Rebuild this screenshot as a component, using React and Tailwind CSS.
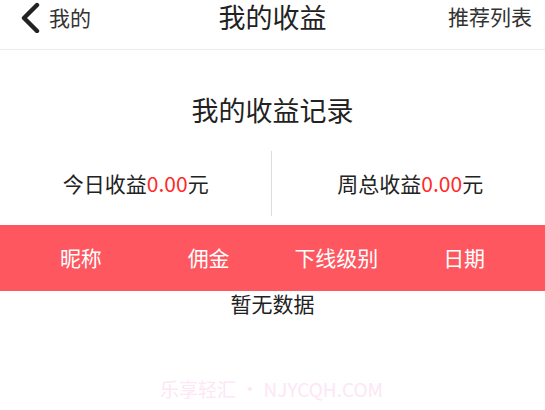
import React from 'react';

const font = { fontFamily: '"Noto Sans CJK SC", "Noto Sans", sans-serif' };

function Header() {
  return (
    <div className="flex items-start justify-between h-[50px] border-b border-[#ececec] px-[13px]">
      <div className="w-[120px] flex items-center h-[34px] pl-[5px]">
        <svg width="25" height="31" viewBox="0 0 25 31" fill="none">
          <path d="M19 3 L6 16 L19 29" stroke="#222" strokeWidth="4.4" strokeLinecap="round" strokeLinejoin="round" />
        </svg>
        <span className="ml-[6px] text-[21px] text-[#333] leading-[30px]">我的</span>
      </div>
      <div className="text-[27px] text-[#222] leading-[34px]">我的收益</div>
      <div className="w-[120px] flex justify-end items-center h-[32px]">
        <span className="text-[21px] text-[#333] leading-[30px]">推荐列表</span>
      </div>
    </div>
  );
}

export default function App() {
  const cols = ['昵称', '佣金', '下线级别', '日期'];
  return (
    <div className="w-[545px] h-[410px] bg-white overflow-hidden" style={font}>
      <Header />
      <div className="pt-[43px] text-center text-[27px] text-[#222] leading-[34px]">我的收益记录</div>
      <div className="mt-[24px] flex h-[65px]">
        <div className="flex-1 flex items-center justify-center text-[21px] text-[#222] pl-[1px]">
          今日收益<span className="text-[#ff2a2a]">0.00</span>元
        </div>
        <div className="w-px bg-[#dcdcdc]" />
        <div className="flex-1 flex items-center justify-center text-[21px] text-[#222] pl-[4px]">
          周总收益<span className="text-[#ff2a2a]">0.00</span>元
        </div>
      </div>
      <div className="mt-[9px] h-[66px] bg-[#fe5760] grid grid-cols-4 px-[17px] items-center">
        {cols.map((c) => (
          <div key={c} className="text-center text-[21px] text-white">{c}</div>
        ))}
      </div>
      <div className="text-center text-[21px] text-[#222] leading-[24px]">暂无数据</div>
      <div className="mt-[60px] text-center text-[19px] text-[#fde6f5] pr-[2px]">乐享轻汇 • NJYCQH.COM</div>
    </div>
  );
}
